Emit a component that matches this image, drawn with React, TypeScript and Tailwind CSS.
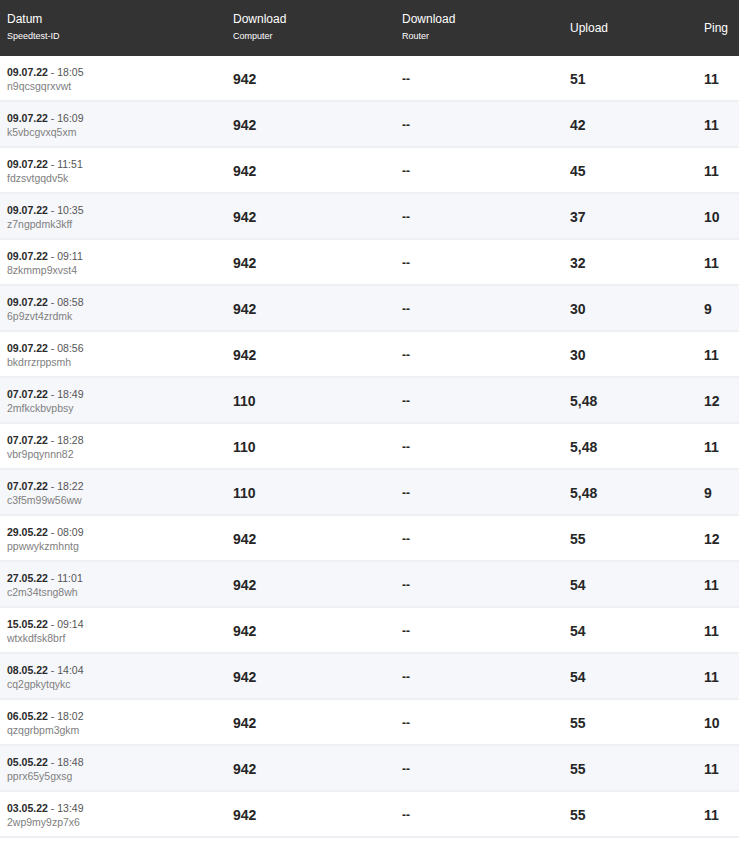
const rows = [
  ["09.07.22", "18:05", "n9qcsgqrxvwt", "942", "51", "11"],
  ["09.07.22", "16:09", "k5vbcgvxq5xm", "942", "42", "11"],
  ["09.07.22", "11:51", "fdzsvtgqdv5k", "942", "45", "11"],
  ["09.07.22", "10:35", "z7ngpdmk3kff", "942", "37", "10"],
  ["09.07.22", "09:11", "8zkmmp9xvst4", "942", "32", "11"],
  ["09.07.22", "08:58", "6p9zvt4zrdmk", "942", "30", "9"],
  ["09.07.22", "08:56", "bkdrrzrppsmh", "942", "30", "11"],
  ["07.07.22", "18:49", "2mfkckbvpbsy", "110", "5,48", "12"],
  ["07.07.22", "18:28", "vbr9pqynnn82", "110", "5,48", "11"],
  ["07.07.22", "18:22", "c3f5m99w56ww", "110", "5,48", "9"],
  ["29.05.22", "08:09", "ppwwykzmhntg", "942", "55", "12"],
  ["27.05.22", "11:01", "c2m34tsng8wh", "942", "54", "11"],
  ["15.05.22", "09:14", "wtxkdfsk8brf", "942", "54", "11"],
  ["08.05.22", "14:04", "cq2gpkytqykc", "942", "54", "11"],
  ["06.05.22", "18:02", "qzqgrbpm3gkm", "942", "55", "10"],
  ["05.05.22", "18:48", "pprx65y5gxsg", "942", "55", "11"],
  ["03.05.22", "13:49", "2wp9my9zp7x6", "942", "55", "11"],
];

const cols = "grid grid-cols-[226px_169px_168px_134px_1fr] px-[7px] items-center";

export default function App() {
  return (
    <div className="w-[739px] min-h-[841px] bg-white font-['Liberation_Sans',Arial,sans-serif] text-[#333]">
      {/* Header */}
      <div className={`${cols} h-[56px] bg-[#333333] text-white`}>
        <div className="flex flex-col">
          <span className="text-[12px] leading-[16px]">Datum</span>
          <span className="text-[9px] leading-[18px]">Speedtest-ID</span>
        </div>
        <div className="flex flex-col">
          <span className="text-[12px] leading-[16px]">Download</span>
          <span className="text-[9px] leading-[18px]">Computer</span>
        </div>
        <div className="flex flex-col">
          <span className="text-[12px] leading-[16px]">Download</span>
          <span className="text-[9px] leading-[18px]">Router</span>
        </div>
        <span className="text-[12px]">Upload</span>
        <span className="text-[12px]">Ping</span>
      </div>

      {/* Rows */}
      {rows.map(([date, time, id, down, up, ping], i) => (
        <div
          key={id}
          className={`${cols} h-[46px] pt-[2px] border-b-2 border-[#eef0f5] ${
            i % 2 === 1 ? "bg-[#f6f7fb]" : "bg-white"
          }`}
        >
          <div className="flex flex-col text-[10.5px] leading-[14px]">
            <span>
              <span className="font-bold text-[#2a2a2a]">{date}</span>
              <span className="text-[#555]"> - {time}</span>
            </span>
            <span className="text-[#808080]">{id}</span>
          </div>
          <span className="text-[14px] font-bold text-[#262626]">{down}</span>
          <span className="text-[12px] font-bold text-[#262626]">--</span>
          <span className="text-[14px] font-bold text-[#262626]">{up}</span>
          <span className="text-[14px] font-bold text-[#262626]">{ping}</span>
        </div>
      ))}
    </div>
  );
}
